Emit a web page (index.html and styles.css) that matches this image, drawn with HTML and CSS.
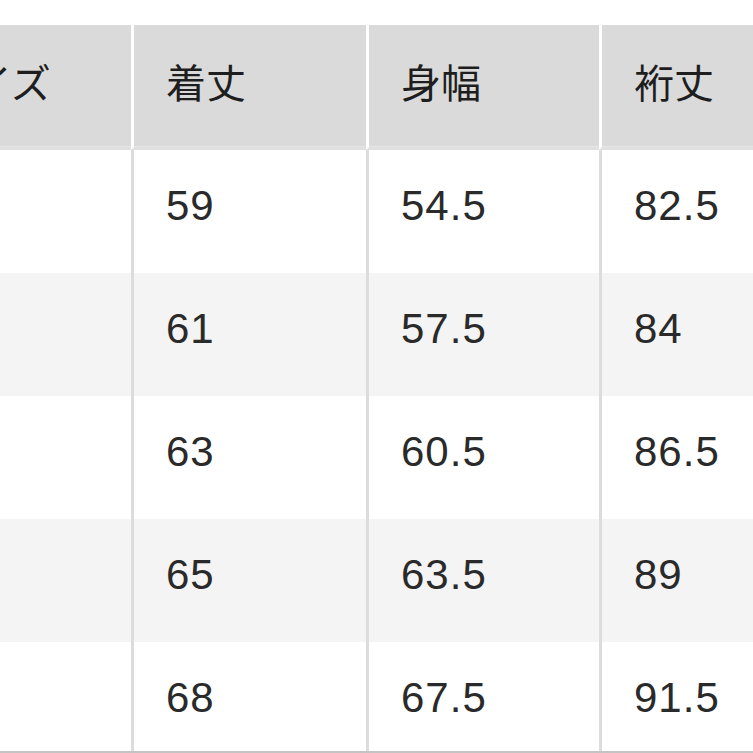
FILE: index.html
```html
<!DOCTYPE html>
<html lang="ja">
<head>
<meta charset="utf-8">
<link rel="stylesheet" href="styles.css">
</head>
<body>
<div class="table">
  <div class="row head">
    <div class="cell">サイズ</div>
    <div class="cell">着丈</div>
    <div class="cell">身幅</div>
    <div class="cell">裄丈</div>
  </div>
  <div class="row body">
    <div class="cell"></div>
    <div class="cell">59</div>
    <div class="cell">54.5</div>
    <div class="cell">82.5</div>
  </div>
  <div class="row body alt">
    <div class="cell"></div>
    <div class="cell">61</div>
    <div class="cell">57.5</div>
    <div class="cell">84</div>
  </div>
  <div class="row body">
    <div class="cell"></div>
    <div class="cell">63</div>
    <div class="cell">60.5</div>
    <div class="cell">86.5</div>
  </div>
  <div class="row body alt">
    <div class="cell"></div>
    <div class="cell">65</div>
    <div class="cell">63.5</div>
    <div class="cell">89</div>
  </div>
  <div class="row body last">
    <div class="cell"></div>
    <div class="cell">68</div>
    <div class="cell">67.5</div>
    <div class="cell">91.5</div>
  </div>
</div>
</body>
</html>
```
FILE: styles.css
```css
html, body {
  margin: 0;
  padding: 0;
  background: #ffffff;
  overflow: hidden;
  width: 753px;
  height: 753px;
}

.table {
  margin-top: 25px;
  margin-left: -100px;
  width: 932px;
  display: flex;
  flex-direction: column;
}

.row {
  display: grid;
  grid-template-columns: 231px 235px 233px 233px;
}

.cell {
  box-sizing: border-box;
  padding-left: 32px;
  color: #1e1e1e;
  white-space: nowrap;
}

.cell + .cell {
  border-left: 3px solid #dcdcdc;
}

.head {
  height: 125px;
}

.head .cell {
  background: #dadada;
  font-family: "Noto Sans CJK JP", "Noto Sans", sans-serif;
  font-size: 40px;
  line-height: 40px;
  padding-top: 36px;
  border-bottom: 3px solid #e0e0e0;
  box-shadow: inset 0 -1px 0 #e6e6e6;
}

.head .cell + .cell {
  border-left: 3px solid #ffffff;
}

.body {
  height: 123px;
}

.body .cell {
  font-family: "Liberation Sans", Arial, sans-serif;
  font-size: 42px;
  line-height: 42px;
  letter-spacing: 1px;
  padding-top: 35px;
  color: #2a2a2a;
}

.alt {
  background: #f4f4f4;
}

.last {
  height: 109px;
  border-bottom: 2px solid #c4c4c4;
}
```
